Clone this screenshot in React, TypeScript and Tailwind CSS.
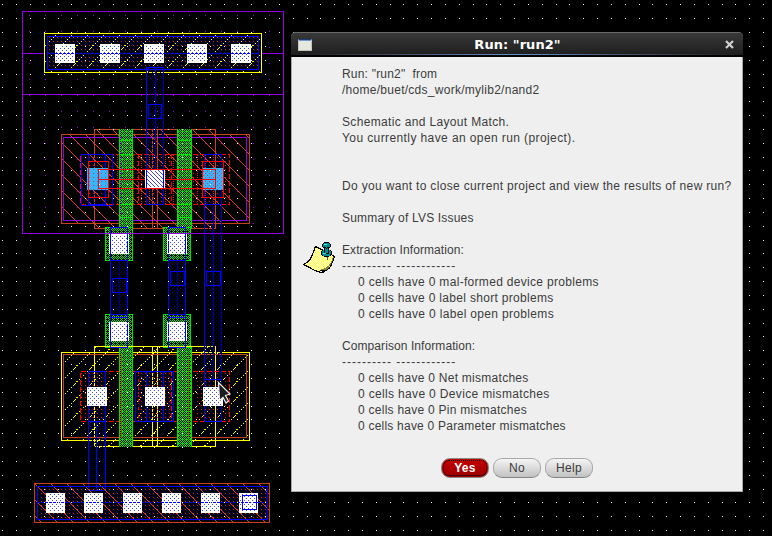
import React from "react";

const BLUE = "#0000ff";
const DEEP_BLUE = "#00007c";
const YELLOW = "#ffff00";
const BRICK = "#c8401e";
const PURPLE = "#9400e6";
const RED = "#ff0000";
const GREEN = "#00e600";

const DOT_PITCH = 83 / 6;
const gridX = Array.from({ length: 56 }, (_, i) => Math.ceil(1.8 + i * DOT_PITCH));
const gridY = Array.from({ length: 39 }, (_, i) => Math.ceil(4 + i * DOT_PITCH - 0.01));

type Box = { x: number; y: number; r: number; b: number };

/* A stipple says which pixels of the canvas a layer paints. */
type Stipple = (x: number, y: number) => boolean;

const blueDots: Stipple = (x, y) => (x % 4 === 0 && y % 4 === 0) || (x % 4 === 2 && y % 4 === 2);
const redDots: Stipple = (x, y) => x % 4 === 1 && y % 4 === 1;
const contactRed: Stipple = (x, y) => (x % 4 === 1 && y % 4 === 1) || (x % 4 === 3 && y % 4 === 3);
const diffusion: Stipple = (x, y) => (x % 4 === 1 && y % 4 === 1) || (x % 8 === 5 && y % 4 === 3);
const brickHatch: Stipple = (x, y) => (x - y + 1600) % 16 === 15;
const wellDots: Stipple = (x, y) => x % 16 === 13 && y % 16 === 15;
const whiteHatch: Stipple = (x, y) => (x - y + 600) % 4 === 0;
const paperDots: Stipple = (x, y) => (x + y) % 2 === 0;

const yellowCells = new Set(["1,9", "3,7", "5,5", "7,3", "9,1", "10,0", "11,15", "12,13", "13,13", "15,11"]);
const yellowHatch: Stipple = (x, y) => yellowCells.has(`${x % 16},${y % 16}`);

const polyRows = ["#.#.", ".#.#", "#.#.", ".#.."];
const poly: Stipple = (x, y) => polyRows[y % 4][x % 4] === "#";
const gateRows = ["#.#.", ".#.#", "#.#.", ".###"];
const gate: Stipple = (x, y) => gateRows[y % 4][x % 4] === "#";

/* Paints the stipple's pixels inside the box. */
function Fill({ x, y, r, b, c, by }: Box & { c: string; by: Stipple }) {
  let d = "";
  for (let py = y; py <= b; py++) {
    for (let px = x; px <= r; px++) {
      if (by(px, py)) d += `M${px} ${py}h1v1h-1z`;
    }
  }
  return <path d={d} fill={c} />;
}

/* One pixel outline whose edges lie on the pixel columns x..r and rows y..b. */
function Outline({ x, y, r, b, c, dash }: Box & { c: string; dash?: string }) {
  return <rect x={x + 0.5} y={y + 0.5} width={r - x} height={b - y} fill="none" stroke={c} strokeWidth={1} strokeDasharray={dash} />;
}

function Area({ x, y, r, b, fill }: Box & { fill: string }) {
  return <rect x={x} y={y} width={r - x + 1} height={b - y + 1} fill={fill} />;
}

function V({ x, y, b, c, dash }: { x: number; y: number; b: number; c: string; dash?: string }) {
  return <line x1={x + 0.5} x2={x + 0.5} y1={y} y2={b + 1} stroke={c} strokeDasharray={dash} />;
}

function H({ y, x, r, c, dash }: { y: number; x: number; r: number; c: string; dash?: string }) {
  return <line y1={y + 0.5} y2={y + 0.5} x1={x} x2={r + 1} stroke={c} strokeDasharray={dash} />;
}

function Contact({ x, y, r, b }: Box) {
  return (
    <g>
      <Area x={x} y={y} r={r} b={b} fill="#fff" />
      <Fill x={x + 1} y={y + 1} r={r - 1} b={b - 1} c="#4848d0" by={blueDots} />
    </g>
  );
}

function PolyPad({ x, y, b, cx, cy, cb }: { x: number; y: number; b: number; cx: number; cy: number; cb: number }) {
  return (
    <g>
      <Area x={x} y={y} r={x + 27} b={b} fill="#000" />
      <Fill x={x} y={y} r={x + 27} b={b} c={GREEN} by={poly} />
      <Outline x={x} y={y} r={x + 27} b={b} c={GREEN} />
      <Contact x={cx} y={cy} r={cx + 19} b={cb} />
    </g>
  );
}

function Gate({ x, y, r, b }: Box) {
  return (
    <g>
      <Area x={x} y={y} r={r} b={b} fill="#000" />
      <Fill x={x} y={y} r={r} b={b} c={GREEN} by={gate} />
      <V x={x} y={y} b={b} c={GREEN} />
      <V x={r} y={y} b={b} c={GREEN} />
    </g>
  );
}

function LayoutCanvas() {
  return (
    <svg className="block" width={772} height={536} viewBox="0 0 772 536" shapeRendering="crispEdges">
      <rect width={772} height={536} fill="#000" />

      {/* n-well */}
      <Fill x={23} y={12} r={282} b={232} c={PURPLE} by={wellDots} />
      <Outline x={22} y={11} r={283} b={233} c={PURPLE} />
      <H y={53} x={22} r={283} c={PURPLE} />
      <H y={94} x={22} r={283} c={PURPLE} />

      {/* supply rail */}
      <Area x={45} y={34} r={260} b={71} fill="#000" />
      <Fill x={48} y={37} r={257} b={68} c={DEEP_BLUE} by={blueDots} />
      <Fill x={48} y={37} r={257} b={68} c="#c83010" by={redDots} />
      <Fill x={45} y={34} r={260} b={71} c={YELLOW} by={yellowHatch} />
      <Outline x={44} y={33} r={261} b={72} c={YELLOW} />
      <Outline x={47} y={36} r={258} b={69} c={BLUE} />
      {[55, 100, 144, 187, 231].map((x) => (
        <Contact key={x} x={x} y={44} r={x + 19} b={62} />
      ))}
      <H y={53} x={47} r={258} c={BLUE} dash="3 1" />

      {/* p-device */}
      <Fill x={62} y={135} r={248} b={222} c="#d84420" by={brickHatch} />
      <Fill x={94} y={129} r={215} b={134} c="#d84420" by={brickHatch} />
      <Fill x={94} y={223} r={215} b={228} c="#d84420" by={brickHatch} />
      <Outline x={61} y={134} r={249} b={223} c={BRICK} />
      <Outline x={94} y={129} r={215} b={228} c={BRICK} />
      <Outline x={63} y={137} r={246} b={220} c={PURPLE} />
      <V x={152} y={129} b={228} c={BRICK} />
      <V x={157} y={129} b={228} c={BRICK} />
      <Fill x={116} y={155} r={228} b={203} c="#e01808" by={diffusion} />
      <Outline x={80} y={154} r={229} b={204} c={RED} dash="5 2" />
      <V x={138} y={154} b={204} c={RED} dash="5 2" />
      <V x={171} y={154} b={204} c={RED} dash="5 2" />

      {/* n-device */}
      <Fill x={62} y={353} r={248} b={439} c={YELLOW} by={yellowHatch} />
      <Fill x={94} y={346} r={215} b={351} c={YELLOW} by={yellowHatch} />
      <Fill x={94} y={441} r={215} b={446} c={YELLOW} by={yellowHatch} />
      <Outline x={61} y={352} r={249} b={440} c={YELLOW} />
      <Outline x={94} y={346} r={215} b={446} c={YELLOW} />
      <V x={152} y={346} b={446} c={YELLOW} />
      <V x={157} y={346} b={446} c={YELLOW} />
      <Outline x={63} y={354} r={246} b={437} c={BRICK} />
      <Fill x={81} y={372} r={112} b={420} c="#e01808" by={redDots} />
      <Fill x={138} y={372} r={171} b={420} c="#e01808" by={redDots} />
      <Fill x={196} y={372} r={228} b={420} c="#e01808" by={redDots} />
      <Outline x={80} y={371} r={229} b={421} c={RED} dash="5 2" />
      <V x={138} y={371} b={421} c={RED} dash="5 2" />
      <V x={171} y={371} b={421} c={RED} dash="5 2" />

      {/* gates */}
      <Gate x={119} y={129} r={132} b={228} />
      <Gate x={177} y={129} r={191} b={228} />
      <Gate x={119} y={346} r={132} b={446} />
      <Gate x={177} y={346} r={191} b={446} />
      <V x={121} y={137} b={220} c={PURPLE} dash="2 3" />
      <V x={121} y={354} b={437} c={BRICK} />
      <V x={188} y={354} b={437} c={BRICK} />
      {[140, 154, 204, 217].map((y) => (
        <g key={y}>
          <H y={y} x={119} r={132} c={GREEN} />
          <H y={y} x={177} r={191} c={GREEN} />
        </g>
      ))}
      <PolyPad x={105} y={227} b={260} cx={109} cy={234} cb={253} />
      <PolyPad x={163} y={227} b={260} cx={167} cy={234} cb={253} />
      <PolyPad x={105} y={314} b={347} cx={109} cy={322} cb={340} />
      <PolyPad x={163} y={314} b={347} cx={167} cy={322} cb={340} />
      <H y={346} x={94} r={215} c={YELLOW} />
      <H y={233} x={22} r={283} c={PURPLE} />

      {/* gate routing */}
      <Fill x={110} y={261} r={127} b={313} c={DEEP_BLUE} by={blueDots} />
      <Fill x={168} y={261} r={185} b={313} c={DEEP_BLUE} by={blueDots} />
      <Outline x={110} y={227} r={127} b={347} c={BLUE} />
      <Outline x={168} y={227} r={185} b={347} c={BLUE} />
      {[260, 314, 317].map((y) => (
        <g key={y}>
          <H y={y} x={110} r={127} c={BLUE} />
          <H y={y} x={168} r={185} c={BLUE} />
        </g>
      ))}
      <V x={119} y={261} b={313} c={DEEP_BLUE} />
      <V x={177} y={261} b={313} c={DEEP_BLUE} />
      <Outline x={112} y={278} r={126} b={292} c={BLUE} />
      <Outline x={170} y={271} r={184} b={285} c={BLUE} />

      {/* output column */}
      <Fill x={204} y={154} r={221} b={421} c={DEEP_BLUE} by={blueDots} />
      <V x={204} y={154} b={421} c={BLUE} />
      <V x={221} y={154} b={421} c="#0000a8" />
      <H y={154} x={204} r={221} c={BLUE} />
      <H y={421} x={204} r={221} c={BLUE} />
      <V x={213} y={206} b={379} c="#0000a8" />
      <H y={204} x={204} r={221} c={BLUE} />
      <H y={379} x={204} r={221} c={BLUE} />
      <Outline x={206} y={271} r={220} b={285} c={BLUE} />

      {/* supply strap */}
      <Fill x={146} y={67} r={163} b={204} c={DEEP_BLUE} by={blueDots} />
      <V x={146} y={67} b={204} c={BLUE} />
      <V x={163} y={67} b={204} c="#0000a8" />
      <H y={67} x={146} r={163} c={BLUE} />
      <V x={155} y={67} b={169} c="#0000a8" />
      <Outline x={148} y={104} r={161} b={118} c={BLUE} />

      {/* drain and source contacts, p side */}
      <Fill x={81} y={154} r={112} b={205} c={DEEP_BLUE} by={blueDots} />
      <Fill x={88} y={156} r={108} b={200} c="#e01808" by={redDots} />
      <Outline x={81} y={154} r={112} b={205} c={BLUE} />
      <Outline x={88} y={154} r={105} b={204} c={BLUE} />
      <Area x={87} y={168} r={108} b={189} fill="#38b4ff" />
      <Area x={202} y={168} r={222} b={189} fill="#38b4ff" />
      <Fill x={88} y={168} r={108} b={189} c="#a05070" by={redDots} />
      <Fill x={203} y={168} r={222} b={189} c="#a05070" by={contactRed} />
      <Area x={145} y={169} r={164} b={187} fill="#fff" />
      <Fill x={147} y={170} r={163} b={186} c="#4848d8" by={whiteHatch} />
      <Outline x={146} y={169} r={163} b={204} c={BLUE} />
      <Outline x={88} y={161} r={108} b={197} c={RED} />
      <Outline x={202} y={161} r={223} b={197} c={RED} />
      <Outline x={98} y={169} r={215} b={188} c={RED} />
      <H y={179} x={98} r={144} c={RED} />
      <H y={179} x={165} r={215} c={RED} />

      {/* contacts, n side */}
      <Fill x={88} y={371} r={105} b={490} c={DEEP_BLUE} by={blueDots} />
      <Outline x={88} y={371} r={105} b={490} c={BLUE} />
      <H y={421} x={88} r={105} c={BLUE} />
      <V x={96} y={421} b={490} c={BLUE} />
      <Fill x={135} y={371} r={173} b={421} c={DEEP_BLUE} by={blueDots} />
      <Outline x={135} y={371} r={173} b={421} c={BLUE} />
      <Outline x={146} y={371} r={163} b={421} c={BLUE} />
      <Contact x={87} y={387} r={106} b={405} />
      <Contact x={145} y={387} r={164} b={405} />
      <Contact x={203} y={387} r={222} b={405} />

      {/* ground rail */}
      <Fill x={37} y={486} r={267} b={519} c={DEEP_BLUE} by={blueDots} />
      <Fill x={37} y={486} r={267} b={519} c="#c83010" by={redDots} />
      <Fill x={35} y={484} r={268} b={521} c="#d84420" by={brickHatch} />
      <Outline x={34} y={483} r={269} b={522} c={BRICK} />
      <Outline x={37} y={486} r={267} b={519} c={BLUE} />
      {[46, 84, 123, 162, 201, 239].map((x) => (
        <Contact key={x} x={x} y={493} r={x + 18} b={512} />
      ))}
      <H y={502} x={37} r={267} c={BLUE} dash="3 1" />
      <Outline x={242} y={495} r={256} b={509} c={BLUE} />

      {/* snap grid */}
      <g fill="#fff">
        {gridY.map((y) => gridX.map((x) => <rect key={`${x}-${y}`} x={x} y={y} width={1} height={1} />))}
      </g>

      <path
        d="M218.5 382.5 L219.5 400.5 L223 397.5 L226 403 L228.5 401 L225.5 395.5 L230 394 Z"
        fill="#1c1c1c"
        stroke="#f4f4f4"
        strokeWidth={1.2}
        shapeRendering="geometricPrecision"
      />
    </svg>
  );
}

const SHEET = "M12.5 4.5 L29 13 L31.5 14.5 L29 21 Q27 27 22.5 28.5 L19 31 L11 28 L.5 22.5 Q8 19 10 11 Z";

function NoteIcon() {
  return (
    <svg className="block h-8 w-8" viewBox="0 0 32 32" shapeRendering="crispEdges">
      <clipPath id="sheet">
        <path d={SHEET} />
      </clipPath>
      <path d={SHEET} fill="#ffffe0" />
      <g clipPath="url(#sheet)">
        <Fill x={0} y={0} r={31} b={31} c="#ffff3c" by={paperDots} />
      </g>
      <path d={SHEET} fill="none" stroke="#000" strokeWidth={1.2} />
      <path d="M30 15 Q27 26 18 27.5 L18 29 L23 28 Q27 26 31 15 Z" fill="#85852c" />
      <path d="M17 28.500 L22.500 28 L18 31" fill="#ffffd8" stroke="#000" />
      <path d="M24 15 L24 18" stroke="#555" />
      <ellipse cx={23.500} cy={11} rx={5} ry={3.700} fill="#008c93" stroke="#000" />
      <rect x={21.500} y={4} width={4} height={7} fill="#008c93" stroke="#000" />
      <ellipse cx={23.500} cy={3.300} rx={4} ry={2.800} fill="#008c93" stroke="#000" />
      <rect x={21} y={2} width={3} height={1} fill="#52e0e0" />
      <rect x={20} y={11} width={3} height={1} fill="#52e0e0" />
    </svg>
  );
}

const message: [string, string][] = [
  ['Run: "run2"\u00a0 from', "tracking-[0.2px]"],
  ["/home/buet/cds_work/mylib2/nand2", "tracking-[0.27px]"],
  ["", ""],
  ["Schematic and Layout Match.", "tracking-[0.34px]"],
  ["You currently have an open run (project).", "tracking-[0.4px]"],
  ["", ""],
  ["", ""],
  ["Do you want to close current project and view the results of new run?", "tracking-[0.33px]"],
  ["", ""],
  ["Summary of LVS Issues", "tracking-[0.18px]"],
  ["", ""],
  ["Extraction Information:", "tracking-[0.08px]"],
  ["---------- ------------", "tracking-[1px]"],
  ["0 cells have 0 mal-formed device problems", "pl-4 tracking-[0.31px]"],
  ["0 cells have 0 label short problems", "pl-4 tracking-[0.31px]"],
  ["0 cells have 0 label open problems", "pl-4 tracking-[0.33px]"],
  ["", ""],
  ["Comparison Information:", "tracking-[0.08px]"],
  ["---------- ------------", "tracking-[1px]"],
  ["0 cells have 0 Net mismatches", "pl-4 tracking-[0.27px]"],
  ["0 cells have 0 Device mismatches", "pl-4 tracking-[0.34px]"],
  ["0 cells have 0 Pin mismatches", "pl-4 tracking-[0.26px]"],
  ["0 cells have 0 Parameter mismatches", "pl-4 tracking-[0.22px]"],
];

function RunDialog() {
  return (
    <section className="absolute top-[32px] left-[291px] flex h-[460px] w-[452px] flex-col overflow-hidden rounded-t-[5px] bg-[#a8a8a8]">
      <header className="flex h-[25px] shrink-0 flex-col bg-gradient-to-b from-[#3a3a3a] to-[#1c1c1c]">
        <div className="flex h-[22px] items-center border-t border-[#696969] pr-[9px] pl-[7px]">
          <span className="mt-0.5 h-3 w-3.5 border border-[#c4c4bc] border-t-[#173c79] bg-[#e5e8df]">
            <span className="block h-px w-full bg-[#6f9bd2]" />
          </span>
          <h1 className="flex-1 pt-0.5 pr-0.5 text-center font-['DejaVu_Sans',sans-serif] text-[13px] leading-4 font-bold tracking-[0.05px] text-white">Run: "run2"</h1>
          <svg className="mt-0.5 h-[9px] w-[9px]" viewBox="0 0 9 9">
            <path d="M1 1 L8 8 M8 1 L1 8" stroke="#d0d0d0" strokeWidth={2.2} />
          </svg>
        </div>
        <div className="h-px bg-gradient-to-r from-[#1c1c1c] via-[#6790c8] to-[#1c1c1c]" />
        <div className="h-0.5 bg-black" />
      </header>
      <div className="mx-px mb-px flex flex-1 flex-col bg-[#efefef] font-['Liberation_Sans',sans-serif] text-[12px] text-[#3c3c3c]">
        <div className="flex pt-[9px] pl-[11px]">
          <div className="w-[39px] shrink-0 pt-[176px]">
            <NoteIcon />
          </div>
          <div className="whitespace-nowrap">
            {message.map(([text, spacing], i) => (
              <p key={i} className={`h-4 leading-4 ${spacing}`}>
                {text}
              </p>
            ))}
          </div>
        </div>
        <div className="mt-6 flex gap-1 pl-[149px]">
          <button className="h-5 w-12 rounded-[9px] border border-[#888] bg-gradient-to-b from-[#c60000] to-[#9b0000] p-px leading-none font-bold tracking-[0.3px] text-white">
            <span className="flex h-full items-center justify-center rounded-[6px] border border-dotted border-black">Yes</span>
          </button>
          <button className="h-5 w-12 rounded-[9px] border border-[#a8a8a8] border-b-[#858585] bg-gradient-to-b from-[#f5f5f5] to-[#c2c2c2] leading-none tracking-[0.3px]">No</button>
          <button className="h-5 w-12 rounded-[9px] border border-[#a8a8a8] border-b-[#858585] bg-gradient-to-b from-[#f5f5f5] to-[#c2c2c2] leading-none tracking-[0.3px]">Help</button>
        </div>
      </div>
    </section>
  );
}

export default function App() {
  return (
    <main className="relative h-[536px] w-[772px] overflow-hidden bg-black">
      <LayoutCanvas />
      <RunDialog />
    </main>
  );
}
